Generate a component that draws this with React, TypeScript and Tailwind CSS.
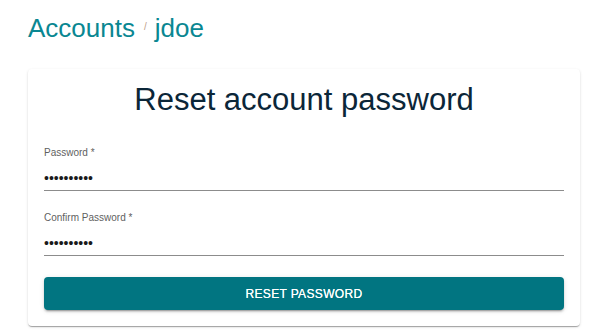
export default function App() {
  return (
    <div className="min-h-screen bg-white px-[28px] pt-[10px] font-['Liberation_Sans',Arial,sans-serif]">
      {/* Breadcrumb */}
      <div className="flex items-center text-[#0a8792]">
        <span className="text-[26px] leading-[36px]">Accounts</span>
        <span className="ml-[9px] mr-[8px] mb-[3px] text-[10px] leading-[10px] text-[#c0a08a]">/</span>
        <span className="text-[26px] leading-[36px]">jdoe</span>
      </div>

      {/* Card */}
      <div className="mt-[23px] w-[552px] rounded-[4px] bg-white px-[16px] pt-[12px] pb-[16px] shadow-[0px_2px_1px_-1px_rgba(0,0,0,0.2),0px_1px_1px_0px_rgba(0,0,0,0.14),0px_1px_3px_0px_rgba(0,0,0,0.12)]">
        <h1 className="text-center text-[31px] leading-[38px] text-[#0b2638]">
          Reset account password
        </h1>

        <div className="mt-[28px] flex flex-col gap-[21px]">
          <Field label="Password *" />
          <Field label="Confirm Password *" />
        </div>

        <button
          type="button"
          className="mt-[21px] h-[33px] w-full rounded-[4px] bg-[#017581] text-[12px] tracking-[0.35px] text-white [text-shadow:0_0_0.4px_#fff] shadow-[0px_3px_1px_-2px_rgba(0,0,0,0.2),0px_2px_2px_0px_rgba(0,0,0,0.14),0px_1px_5px_0px_rgba(0,0,0,0.12)]"
        >
          RESET PASSWORD
        </button>
      </div>
    </div>
  )
}

function Field({ label }: { label: string }) {
  return (
    <div className="flex flex-col">
      <label className="text-[10px] leading-[12px] text-[#5f5f5f]">{label}</label>
      <input
        type="password"
        defaultValue="••••••••••"
        readOnly
        className="h-[32px] border-b border-[#8c8c8c] pt-[6px] text-[14px] text-[#1a1a1a] outline-none"
      />
    </div>
  )
}
